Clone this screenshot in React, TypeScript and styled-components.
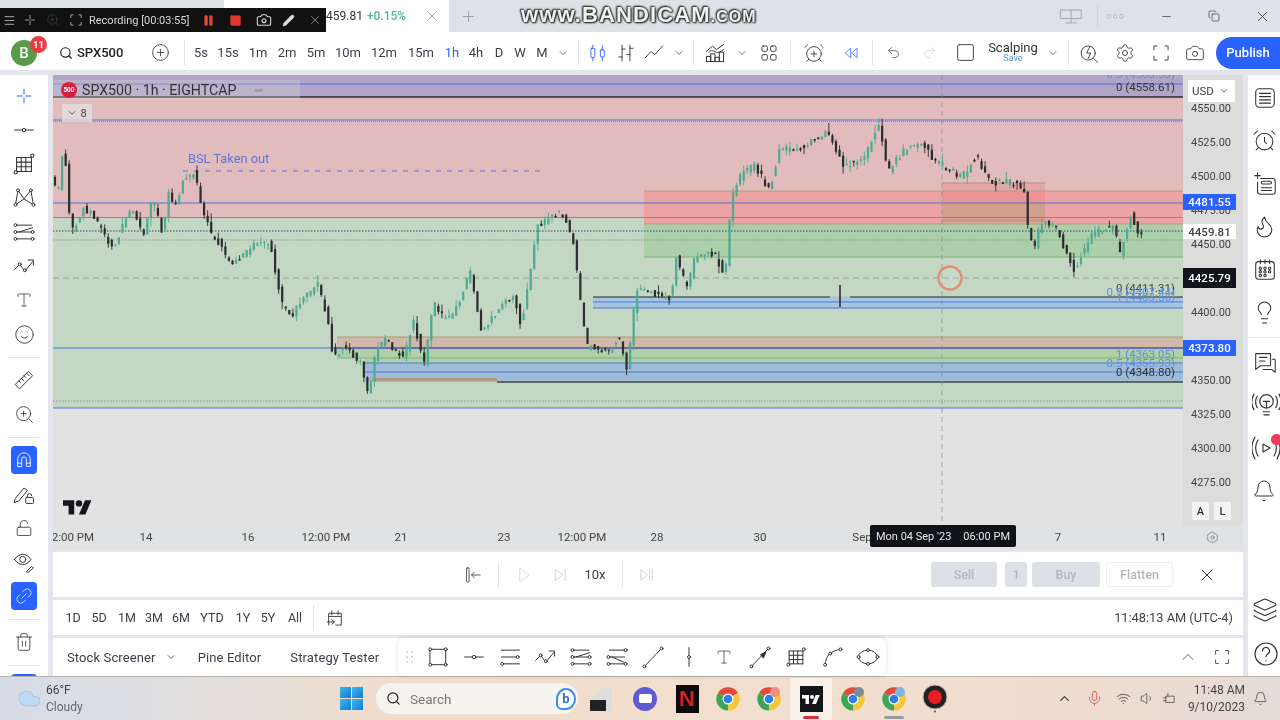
import React from "react";
import styled, { createGlobalStyle } from "styled-components";
import {
  Search, CirclePlus, ChevronDown, ChevronUp, AlarmClockPlus, AlarmClock, Undo2, Redo2, Settings, Camera, Minus, X, Plus,
  Layers, Bell, Flame, Lightbulb, Smile, ZoomIn, Trash2, LockOpen, Pause, Square, Pencil, Menu,
  Mic, Wifi, Volume1, Copy, Cloud, Type,
} from "lucide-react";

const GlobalStyle = createGlobalStyle`
  html, body { margin: 0; padding: 0; background: #e4e6eb; overflow: hidden; }
  body { font-family: Roboto, "Liberation Sans", sans-serif; color: #2a2e39; }
  #root { width: 1280px; height: 720px; }
`;

const Page = styled.div`
  width: 1280px; height: 720px; display: flex; flex-direction: column; position: relative; overflow: hidden;
  background: #e4e6eb; filter: blur(0.45px);
`;

/* ---------- generic line glyph ---------- */
const GlyphSvg = styled.svg<{ $s: number; $c?: string }>`
  width: ${p => p.$s}px; height: ${p => p.$s}px; flex: none; display: block;
  fill: none; stroke: ${p => p.$c ?? "#333"}; stroke-width: 1.15; stroke-linecap: round; stroke-linejoin: round;
`;
const G = ({ s = 24, c, children }: { s?: number; c?: string; children: React.ReactNode }) => (
  <GlyphSvg viewBox="0 0 28 28" $s={s} $c={c}>{children}</GlyphSvg>
);
const Dot = ({ x, y, r = 1.7 }: { x: number; y: number; r?: number }) => <circle cx={x} cy={y} r={r} fill="#fff" />;

const icons: Record<string, React.ReactNode> = {
  cross: <path d="M14 6v6M14 16v6M6 14h6M16 14h6" />,
  dash: <><path d="M3 14h9M16 14h9" /><circle cx="14" cy="14" r="2" /></>,
  fibgrid: <><path d="M6 7h16M6 12h16M6 17h16M6 22h16M6 7v15M11 7v15M16 7v15M22 7v15" /><Dot x={23} y={5} /><Dot x={5} y={23} /></>,
  xabcd: <><path d="M7 5l-3 17M7 5l7 10 8-10 3 17M4 22l10-7 11 7" /><Dot x={7} y={5} /><Dot x={22} y={5} /><Dot x={4} y={22} /><Dot x={25} y={22} /></>,
  fibchan: <><path d="M5 6h18M8 14l16-5M5 14h18M5 22h18" /><Dot x={4} y={6} /><Dot x={24} y={14} /><Dot x={4} y={14} /><Dot x={4} y={22} /><Dot x={24} y={22} /></>,
  fibchan2: <><path d="M5 6h18M5 14h18M5 22h18M8 14l14 6" /><Dot x={24} y={6} /><Dot x={4} y={14} /><Dot x={4} y={22} /><Dot x={24} y={22} /></>,
  path: <><path d="M3 18l6-6 6 8 9-11M19 7h6v6" /><Dot x={9} y={12} /><Dot x={15} y={19} /></>,
  ruler: <><path d="M4 19L19 4l5 5L9 24zM8 15l2 2M11 12l3 3M14 9l2 2M17 6l3 3" /></>,
  magnet: <path d="M6 22V13a8 8 0 0 1 16 0v9h-5v-9a3 3 0 0 0-6 0v9zM6 18h5M17 18h5" />,
  pencilLock: <><path d="M4 19L14 7l4 3L8 22l-5 2z" /><rect x="16" y="18" width="9" height="7" rx="1" /><path d="M18 18v-2a2.400 2.400 0 0 1 5 0" /></>,
  eyePencil: <><path d="M3 11c5-8 14-8 19 0-5 8-14 8-19 0z" /><circle cx="12.500" cy="11" r="3.500" /><path d="M17 25l6-6 2 2-6 5z" /></>,
  link: <path d="M12 9l3-3a5 5 0 0 1 7 7l-3 3M16 19l-3 3a5 5 0 0 1-7-7l3-3M11 17l6-6" />,
  candles: <><rect x="5" y="8" width="5" height="12" rx="1" /><path d="M7.500 4v4M7.500 20v4" /><rect x="17" y="10" width="5" height="9" rx="1" /><path d="M19.500 5v5M19.500 19v5" /></>,
  bars: <path d="M9 4v20M9 9h4M5 19h4M19 4v20M19 8h4M15 16h4" />,
  line: <path d="M3 20l7-8 5 4 10-11" />,
  indic: <><path d="M4 12l7-6 5 4 8-6M7 13c3-3 5-2 8 0 3 1 5 0 9-3" /><path d="M4 24v-6h5v6M9 24V15h5v9M14 24v-5h5v5M19 24V13h5v11M4 24h20" /></>,
  grid4: <><rect x="5" y="5" width="7" height="7" rx="2" /><rect x="16" y="5" width="7" height="7" rx="2" /><rect x="5" y="16" width="7" height="7" rx="2" /><rect x="16" y="16" width="7" height="7" rx="2" /></>,
  rewind: <path d="M13 7l-8 7 8 7zM23 7l-8 7 8 7z" />,
  flash: <><circle cx="13" cy="14" r="9" /><path d="M20 21l5 5M15 6l-4 8h5l-3 7" /></>,
  corners: <path d="M9 5H5v5M19 5h4v5M9 23H5v-5M19 23h4v-5" />,
  selectbar: <><rect x="5" y="4" width="3.500" height="20" rx="1" /><path d="M24 14H12M16 10l-4 4 4 4" /></>,
  playT: <path d="M8 4l14 10-14 10z" />,
  stepf: <path d="M7 6l11 8-11 8zM22 5v18" />,
  jump: <path d="M5 6l10 8-10 8zM18 5v18M22 5v18" />,
  calgo: <path d="M6 23V8h16v15h-7M6 12h16M10 5v5M18 5v5M4 19h9M10 16l3 3-3 3" />,
  rect: <><rect x="5" y="5" width="18" height="18" /><Dot x={5} y={5} /><Dot x={23} y={5} /><Dot x={5} y={23} /><Dot x={23} y={23} /></>,
  lines3: <><path d="M4 6h21M4 14h17M7 22h18" /><Dot x={23} y={14} /><Dot x={5} y={22} /></>,
  trend: <><path d="M5 24L23 5" /><Dot x={4} y={25} /><Dot x={24} y={4} /></>,
  vline: <><path d="M14 3v22" /><Dot x={14} y={14} /></>,
  arrow: <><path d="M5 24L23 5" /><path d="M15 11l6-3-3 7z" fill="#333" /><Dot x={4} y={25} /><Dot x={24} y={4} /></>,
  curve: <><path d="M6 23C7 12 12 7 24 5" /><Dot x={6} y={23} /><Dot x={12} y={10} /><Dot x={24} y={5} /></>,
  ellipse: <><ellipse cx="14" cy="14" rx="11" ry="8" /><Dot x={14} y={6} /><Dot x={3} y={14} /><Dot x={25} y={14} /><Dot x={14} y={22} /></>,
  list: <><rect x="4" y="4" width="20" height="20" rx="4" /><path d="M8 9h12M8 12.500h12M8 16h12M8 19.500h12" /></>,
  addList: <><path d="M9 8h13a3 3 0 0 1 3 3v11a3 3 0 0 1-3 3H9a3 3 0 0 1-3-3V12M3 5h6M6 2v6" /><rect x="10" y="11" width="11" height="3" rx="1.500" /><path d="M10 18h11M10 21h11" /></>,
  cal: <><rect x="4" y="5" width="20" height="19" rx="3" /><path d="M9 3v4M14 3v4M19 3v4" /><circle cx="9" cy="12" r="1.300" /><circle cx="14" cy="12" r="1.300" /><circle cx="19" cy="12" r="1.300" /><circle cx="9" cy="16" r="1.300" /><circle cx="14" cy="16" r="1.300" /><circle cx="19" cy="16" r="1.300" /><circle cx="9" cy="20" r="1.300" /><circle cx="14" cy="20" r="1.300" /></>,
  chat: <path d="M4 5h15a1 1 0 0 1 1 1v11a1 1 0 0 1-1 1H9l-5 4zM8 9h8M8 13h6M22 11h2a1 1 0 0 1 1 1v13l-4-3H12" />,
  bulbwave: <><circle cx="14" cy="11" r="6.500" /><path d="M11 21h6M11.500 24h5M11 11h6M14 11v6M5 6c-2 3-2 8 0 11M2 4c-3 5-3 10 0 15M23 6c2 3 2 8 0 11M26 4c3 5 3 10 0 15" /></>,
  playwave: <path d="M11 10l7 4-7 4zM6 6c-3 5-3 11 0 16M3 3c-4 7-4 15 0 22M22 6c3 5 3 11 0 16M25 3c4 7 4 15 0 22" />,
  help: <><circle cx="14" cy="14" r="11" /><path d="M10.500 11a3.500 3.500 0 1 1 5.200 3c-1.200.7-1.700 1.400-1.700 2.800M14 20.500v.3" /></>,
  monitor: <path d="M2 7h24v10H2zM14 7v15M8 22h12" />,
  hexgear: <><path d="M14 4l9 5v10l-9 5-9-5V9z" /><circle cx="14" cy="14" r="3" /></>,
  plugbat: <path d="M9 9h14v11H9zM9 12H4M9 17H4M12 9V4" />,
};
const Ic = ({ n, s, c }: { n: string; s?: number; c?: string }) => <G s={s} c={c}>{icons[n]}</G>;

/* ---------- slots used by all bars ---------- */
const Slot = styled.div<{ $w: number; $c?: string; $fs?: number; $b?: boolean }>`
  width: ${p => p.$w}px; flex: none; display: flex; align-items: center; justify-content: center;
  font-size: ${p => p.$fs ?? 13}px; color: ${p => p.$c ?? "#3c4048"}; font-weight: ${p => (p.$b ? 500 : 400)};
  white-space: nowrap;
`;
const Sep = styled.i` display: block; width: 1px; height: 26px; background: #e3e5ea; `;

/* ---------- browser tab strip ---------- */
const TabStrip = styled.div` height: 32px; flex: none; display: flex; align-items: center; background: #dee2e8; `;
const ActiveTab = styled.div`
  margin-left: 224px; width: 225px; height: 32px; background: #fff; display: flex; align-items: center;
  padding-left: 102px; box-sizing: border-box; font-size: 12px; color: #333; gap: 4px;
`;
const Up = styled.span` color: #4fb893; font-weight: 500; `;
const TabClose = styled.span` margin-left: 14px; display: flex; color: #8c8f96; `;
const WinControls = styled.div` margin-left: auto; display: flex; align-items: center; color: #555; `;
const VSep = styled.i` display: block; width: 1px; height: 22px; background: #cfd3da; margin: 0 8px 0 14px; `;
const ThreeDots = styled.span` font-size: 9px; letter-spacing: 1px; color: #999; width: 48px; text-align: left; `;

/* recording overlay */
const RecBar = styled.div`
  position: absolute; left: 0; top: 8px; width: 326px; height: 24px; background: #111; color: #d8d8d8; display: flex; align-items: center;
  font-size: 12px; z-index: 5;
`;
const RecText = styled.span` width: 111px; flex: none; padding-left: 1px; box-sizing: border-box; font-size: 11px; `;
const Watermark = styled.div`
  position: absolute; left: 521px; top: 2px; z-index: 5; font: 700 22px "Liberation Sans", sans-serif; letter-spacing: 1.1px; color: #f1f1f1;
  text-shadow: 0 0 2px #222, 0 0 2px #222, 1px 1px 2px #222, -1px -1px 2px #222;
`;
const WmSmall = styled.span` font-size: 16px; `;

/* ---------- top toolbar ---------- */
const TopBar = styled.div` height: 38px; flex: none; background: #fff; display: flex; align-items: flex-end; box-sizing: border-box; `;
const TopRow = styled.div` height: 35px; display: flex; align-items: stretch; width: 100%; `;
const Avatar = styled.div`
  position: relative; width: 26px; height: 26px; border-radius: 50%; background: #5a9a4c; color: #fff; display: flex; align-items: center; justify-content: center;
  font-size: 15px; font-weight: 500;
`;
const Badge = styled.span`
  position: absolute; left: 19px; top: -4px; width: 17px; height: 17px; border-radius: 50%; background: #ee3a43; color: #fff; font-size: 9.500px;
  display: flex; align-items: center; justify-content: center; font-weight: 700;
`;
const Symbol = styled.div` width: 92px; display: flex; align-items: center; gap: 4px; padding-left: 11px; box-sizing: border-box; font-size: 13px; font-weight: 500; color: #222; `;
const SaveStack = styled.div` display: flex; flex-direction: column; align-items: center; line-height: 12px; font-size: 13px; color: #333; `;
const SaveLabel = styled.span` font-size: 9px; line-height: 9px; color: #5b8fd8; `;
const Publish = styled.div`
  width: 64px; height: 32px; flex: none; align-self: center; border-radius: 16px 0 0 16px; background: #2962ff; color: #fff; display: flex; align-items: center; justify-content: center; font-size: 13px; font-weight: 500;
`;

/* ---------- main ---------- */
const Main = styled.div` flex: 1; display: flex; margin-top: 5px; min-height: 0; gap: 5px; `;
const LeftBar = styled.div`
  width: 48px; flex: none; background: #fff; display: flex; flex-direction: column; align-items: center; padding-top: 4px; box-sizing: border-box; overflow: hidden;
`;
const ToolSlot = styled.div`
  width: 100%; height: 34px; flex: none; display: flex; align-items: center; justify-content: center; color: #333;
`;
const Active = styled.div` width: 26px; height: 28px; border-radius: 4px; background: #2962ff; display: flex; align-items: center; justify-content: center; `;
const ToolSep = styled.div` height: 12px; flex: none; width: 32px; display: flex; align-items: center; &::before { content: ""; width: 100%; height: 1px; background: #e4e6ea; } `;
const Center = styled.div` flex: 1; display: flex; flex-direction: column; min-width: 0; `;
const ChartWrap = styled.div` display: grid; grid-template-columns: 1130px 60px; grid-template-rows: 450px 25px; height: 475px; flex: none; position: relative; `;
const PlotSvg = styled.svg` display: block; width: 1130px; height: 450px; background: #e2e2e2; `;
const Legend = styled.div`
  position: absolute; left: 0; top: 5px; width: 247px; height: 20px; background: rgba(214,214,214,.32); display: flex; align-items: center; padding-left: 8px; box-sizing: border-box;
  font-size: 14.200px; color: #303238; gap: 5px;
`;
const SymbolMark = styled.span`
  width: 16px; height: 16px; border-radius: 50%; background: #d8203a; color: #fff; font-size: 6.500px; font-weight: 700; display: flex; align-items: center; justify-content: center; flex: none;
`;
const LegendEq = styled.span` margin-left: 14px; width: 8px; height: 3px; background: #a0a0a8; `;
const Fold = styled.div`
  position: absolute; left: 9px; top: 29px; width: 30px; height: 18px; background: rgba(226,226,226,.75); display: flex; align-items: center; justify-content: center; gap: 3px; font-size: 11px; color: #444;
`;
const PriceAxis = styled.div` position: relative; background: #dcdcdd; overflow: hidden; `;
const PriceText = styled.span<{ $y: number }>`
  position: absolute; left: 8px; top: ${p => p.$y - 75 - 6}px; font-size: 11px; line-height: 14px; color: #444;
`;
const PriceTag = styled.span<{ $y: number; $h: number; $bg: string; $c: string }>`
  position: absolute; left: 0; width: 53px; top: ${p => p.$y - 75 - p.$h / 2}px; height: ${p => p.$h}px; background: ${p => p.$bg}; color: ${p => p.$c};
  font-size: 11.500px; font-weight: 500; display: flex; align-items: center; justify-content: center;
`;
const Usd = styled.div`
  position: absolute; left: 5px; top: 5px; width: 47px; height: 22px; background: #fff; display: flex; align-items: center; justify-content: space-between; padding: 0 6px 0 4px; box-sizing: border-box; font-size: 11.500px; color: #444;
`;
const ModeBtn = styled.span<{ $x: number }>`
  position: absolute; left: ${p => p.$x}px; top: 427px; width: 17px; height: 18px; background: #f4f4f4; color: #333; font-size: 11px; display: flex; align-items: center; justify-content: center; font-weight: 500;
`;
const TimeAxis = styled.div` position: relative; background: #e1e2e3; overflow: hidden; `;
const TimeText = styled.span<{ $x: number }>`
  position: absolute; left: ${p => p.$x - 53}px; top: 5px; transform: translateX(-50%); font-size: 11.500px; line-height: 15px; color: #444; white-space: nowrap;
`;
const TimeTip = styled.div`
  position: absolute; left: 817px; top: 0; width: 146px; height: 22px; background: #101218; color: #e8e8e8; font-size: 11px; display: flex; align-items: center; justify-content: center; gap: 12px; border-radius: 2px;
`;
const AxisCorner = styled.div` background: #e1e2e3; display: flex; align-items: center; justify-content: center; color: #666; padding-right: 2px; `;

const Panel = styled.div<{ $h: number; $mt: number }>`
  height: ${p => p.$h}px; margin-top: ${p => p.$mt}px; flex: none; background: #fff; display: flex; align-items: center; position: relative;
`;
const TradeBtn = styled.div<{ $w: number; $ml?: number; $outline?: boolean }>`
  width: ${p => p.$w}px; height: 25px; border-radius: 3px; margin-left: ${p => p.$ml ?? 0}px; flex: none;
  background: ${p => (p.$outline ? "#fff" : "#dde0e6")}; border: ${p => (p.$outline ? "1px solid #eceef1" : "0")}; box-sizing: border-box;
  color: #b4b7bd; font-size: 12.500px; font-weight: 500; display: flex; align-items: center; justify-content: center;
`;
const Right = styled.div` margin-left: auto; display: flex; align-items: center; `;
const CloseSlot = styled.div` margin: 0 26px 0 24px; color: #333; display: flex; `;
const Clock = styled.div` font-size: 12.800px; color: #444; margin-right: 10px; `;
const BottomTab = styled.span<{ $ml: number }>` margin-left: ${p => p.$ml}px; font-size: 13px; letter-spacing: .12px; color: #3c4048; white-space: nowrap; `;
const DrawBar = styled.div`
  margin-left: 19px; width: 488px; height: 38px; display: flex; align-items: center; background: #fff; border-radius: 6px; box-shadow: 0 0 4px rgba(0,0,0,.14);
`;
const GripDots = styled.div` display: grid; grid-template-columns: 2px 2px; gap: 3px; & > i { width: 2px; height: 2px; background: #ccc; border-radius: 50%; } `;

const SideBar = styled.div`
  width: 32px; flex: none; background: #fff; display: flex; flex-direction: column; align-items: center; padding-top: 1px; box-sizing: border-box;
`;
const SideSlot = styled.div<{ $h: number }>` height: ${p => p.$h}px; flex: none; display: flex; align-items: center; justify-content: flex-start; width: 100%; padding-left: 4px; box-sizing: border-box; color: #333; position: relative; `;
const SideSep = styled.div` width: 100%; height: 6px; flex: none; display: flex; align-items: center; &::before { content: ""; width: 100%; height: 1px; background: #e4e6ea; } `;
const RedDot = styled.span` position: absolute; right: -2px; top: 8px; width: 11px; height: 11px; border-radius: 50%; background: #f23b5c; `;
const SideBottom = styled.div` margin-top: auto; width: 100%; display: flex; flex-direction: column; `;

/* ---------- taskbar ---------- */
const Taskbar = styled.div`
  height: 44px; flex: none; display: flex; align-items: center; border-top: 1px solid #b9b6b2; box-sizing: border-box;
  background: linear-gradient(90deg, #d5dbe7 0%, #dfdfe2 12%, #f1ddca 32%, #f3dfcf 60%, #eedccf 85%, #e6dbd6 100%);
`;
const Weather = styled.div` width: 330px; flex: none; display: flex; align-items: center; gap: 4px; padding-left: 17px; box-sizing: border-box; `;
const WeatherText = styled.div` font-size: 12px; line-height: 17px; color: #444; `;
const Grey = styled.div` color: #666; `;
const WinLogo = styled.div` display: grid; grid-template-columns: 11px 11px; gap: 1px; & > i { width: 11px; height: 11px; background: linear-gradient(135deg, #3db8ee, #0f7dd0); } `;
const SearchPill = styled.div`
  margin-left: 4px; width: 202px; height: 31px; border-radius: 16px; background: #f7f4f0; display: flex; align-items: center; padding: 0 2px 0 10px; box-sizing: border-box; gap: 9px; font-size: 13.500px; color: #777; flex: none;
`;
const BingMark = styled.div` margin-left: auto; width: 20px; height: 22px; border: 2px solid #3b8ee8; border-radius: 50% 50% 50% 6px; background: #fff; color: #2b6fd6; display: flex; align-items: center; justify-content: center; font-size: 13px; font-weight: 700; box-sizing: border-box; `;
const AppStack = styled.div<{ $active?: boolean }>`
  width: 100%; height: 42px; display: flex; align-items: center; justify-content: center; position: relative;
  background: ${p => (p.$active ? "rgba(255,255,255,.55)" : "transparent")};
`;
const Under = styled.span<{ $c: string; $w: number }>`
  position: absolute; bottom: 1px; left: 50%; transform: translateX(-50%); width: ${p => p.$w}px; height: 2.500px; border-radius: 2px; background: ${p => p.$c};
`;
const DocIcon = styled.div` width: 22px; height: 24px; background: linear-gradient(135deg, transparent 30%, #ddd 30%); position: relative; &::after { content: ""; position: absolute; left: 0; bottom: 0; width: 16px; height: 11px; background: #222; } `;
const Netflix = styled.div` width: 23px; height: 28px; background: #0b0b0b; color: #d81f26; font: 700 22px "Liberation Sans", sans-serif; display: flex; align-items: center; justify-content: center; `;
const TvTile = styled.div` width: 23px; height: 26px; background: #121418; display: flex; align-items: center; justify-content: center; `;
const MeetBall = styled.div` width: 24px; height: 24px; border-radius: 50%; background: #5f5bd3; display: flex; align-items: center; justify-content: center; `;
const MeetCam = styled.i` width: 13px; height: 9px; background: #fff; border-radius: 2px; display: block; `;
const ClockText = styled.div` font-size: 12px; line-height: 17px; color: #444; text-align: right; width: 100%; padding-right: 7px; box-sizing: border-box; `;
const Tray = styled.div` margin-left: auto; display: flex; align-items: center; padding-right: 12px; `;

/* ---------- chrome logo, tv logo ---------- */
const Chrome = ({ badge }: { badge?: string }) => (
  <svg width="26" height="26" viewBox="0 0 26 26">
    <path d="M13 13L3 7A11.500 11.500 0 0 1 23 7z" fill="#e2493b" />
    <path d="M13 13L23 7A11.500 11.500 0 0 1 13 24.500z" fill="#f5c53a" />
    <path d="M13 13L13 24.500A11.500 11.500 0 0 1 3 7z" fill="#3da655" />
    <circle cx="13" cy="13" r="5.500" fill="#fff" /><circle cx="13" cy="13" r="4.300" fill="#2f7fe6" />
    {badge && <circle cx="19" cy="6" r="5" fill={badge} />}
  </svg>
);
const TvLogo = ({ color = "#fff", w = 18 }: { color?: string; w?: number }) => (
  <svg width={w} height={w * 0.62} viewBox="0 0 36 22"><path d="M14 22H7V11H0V4h14v18zM28 22h-8l7.500-18h8L28 22z" fill={color} /><circle cx="20" cy="8" r="4" fill={color} /></svg>
);

/* ---------- chart data ---------- */
const pts: [number, number][] = [[53,180],[60,190],[66,138],[70,210],[74,232],[86,207],[97,218],[115,250],[126,220],[135,210],[145,238],[154,197],[165,235],[170,192],[177,208],[185,178],[197,173],[203,207],[212,232],[221,243],[232,265],[246,255],[257,243],[272,243],[283,303],[294,315],[319,283],[330,320],[335,360],[346,345],[363,363],[370,397],[377,353],[386,340],[406,358],[415,320],[426,363],[435,302],[446,320],[457,310],[472,273],[483,332],[501,310],[515,293],[523,327],[539,227],[563,210],[575,243],[588,347],[612,350],[620,337],[629,370],[638,290],[673,298],[678,258],[689,290],[696,258],[715,253],[727,275],[733,197],[744,173],[756,165],[771,190],[782,147],[795,152],[829,132],[845,167],[867,157],[881,122],[889,173],[904,152],[922,142],[936,160],[964,177],[978,155],[991,182],[1011,182],[1027,190],[1029,223],[1035,253],[1042,222],[1056,225],[1076,270],[1093,235],[1116,225],[1121,257],[1133,212],[1142,243],[1145,225]];
const yAt = (x: number) => {
  for (let i = 1; i < pts.length; i++) if (x <= pts[i][0]) {
    const [a, b] = pts[i - 1], [c, d] = pts[i];
    return b + ((d - b) * (x - a)) / (c - a);
  }
  return pts[pts.length - 1][1];
};
let seed = 42;
const rnd = () => { seed = (seed * 16807) % 2147483647; return seed / 2147483647; };
const STEP = 3.55;
const candles = Array.from({ length: Math.floor((1145 - 55) / STEP) }, (_, i) => {
  const x = 55 + i * STEP;
  const o = yAt(x - STEP / 2) + (rnd() - 0.5) * 7;
  const c = yAt(x + STEP / 2) + (rnd() - 0.5) * 7;
  const hi = Math.min(o, c) - rnd() * rnd() * 9;
  const lo = Math.max(o, c) + rnd() * rnd() * 9;
  return { x, o, c, hi, lo, up: c < o };
});

const HLine = ({ y, c, x1 = 53, x2 = 1183, w = 1, dash }: { y: number; c: string; x1?: number; x2?: number; w?: number; dash?: string }) => (
  <line x1={x1} x2={x2} y1={y} y2={y} stroke={c} strokeWidth={w} strokeDasharray={dash} />
);
const Zone = ({ x = 53, x2 = 1183, y, y2, c }: { x?: number; x2?: number; y: number; y2: number; c: string }) => (
  <rect x={x} y={y} width={x2 - x} height={y2 - y} fill={c} />
);
const FibText = ({ y, c, t }: { y: number; c: string; t: string }) => (
  <text x="1175" y={y} textAnchor="end" fontSize="11.500" fill={c} fontFamily="Roboto, sans-serif">{t}</text>
);

const Plot = () => (
  <PlotSvg viewBox="53 75 1130 450">
    <Zone y={75} y2={97} c="#b2a4c8" />
    <Zone y={97} y2={218} c="#e2bcbd" />
    <Zone y={218} y2={408} c="#c3d7c2" />
    <Zone x={644} y={191} y2={224} c="#eba3a4" />
    <Zone x={644} y={224} y2={257} c="#abd0a9" />
    <Zone x={942} x2={1045} y={183} y2={203} c="rgba(232,110,120,.28)" />
    <Zone x={942} x2={1045} y={203} y2={221} c="rgba(170,150,100,.35)" />
    <Zone x={593} y={297} y2={308} c="#a6c3df" />
    <Zone x={337} y={337} y2={348} c="#d0b8ab" />
    <Zone x={337} y={348} y2={358} c="#aed0ab" />
    <Zone x={365} y={358} y2={363} c="#aed0ab" />
    <Zone x={365} y={363} y2={382} c="#9fbcd7" />
    <Zone x={372} x2={497} y={378} y2={381} c="#b09a84" />
    <HLine y={84} c="#4f6fd8" />
    <HLine y={97} c="#2a2a30" w={1.300} />
    <HLine y={120} c="#5575d8" />
    <HLine y={121.500} c="#7f88b8" dash="1 1" />
    <HLine y={203} c="#4f6fd8" />
    <HLine y={217.500} c="#c2706c" />
    <HLine y={191} x1={644} c="#b89a80" />
    <HLine y={224} x1={644} c="#b49b78" />
    <HLine y={257} x1={644} c="#7fb07a" />
    <HLine y={183} x1={942} x2={1045} c="#b58f78" />
    <HLine y={221} x1={942} x2={1045} c="#a79a78" />
    <HLine y={231} c="#34446e" dash="1.500 1.500" />
    <HLine y={240} c="#8d9c8c" dash="1.500 1.500" />
    <HLine y={278} c="#97a596" dash="6 4" />
    <HLine y={297} x1={593} c="#25282c" w={1.200} />
    <HLine y={302} x1={593} c="#4f79d8" />
    <HLine y={308} x1={593} c="#4f79d8" />
    <HLine y={337} x1={337} c="#a99a73" />
    <HLine y={348} c="#4f76d8" />
    <HLine y={348} x1={337} c="#6a58a8" w={1.300} />
    <HLine y={358} x1={337} c="#7fb07a" />
    <HLine y={363} x1={365} c="#4f76d8" />
    <HLine y={372} x1={365} c="#4f76d8" />
    <HLine y={382} x1={497} c="#40484a" w={1.300} />
    <HLine y={401} c="#8d9c8c" dash="1.500 1.500" />
    <HLine y={408} c="#4f6fd8" />
    <HLine y={171} x1={183} x2={540} c="#5f75d6" dash="5 6" />
    <line x1="942" x2="942" y1="75" y2="525" stroke="#8a8d94" strokeDasharray="5 4" strokeWidth=".7" />
    {candles.map((k, i) => {
      const col = k.up ? "#4dab90" : "#2b2c2e";
      return (
        <g key={i}>
          <line x1={k.x} x2={k.x} y1={k.hi} y2={k.lo} stroke={col} strokeWidth=".9" />
          <rect x={k.x - 1.1} y={Math.min(k.o, k.c)} width="2.200" height={Math.max(Math.abs(k.o - k.c), 1.500)} fill={col} />
        </g>
      );
    })}
    <text x="188" y="163" fontSize="12.800" fill="#5f75d6" fontFamily="Roboto, sans-serif">BSL Taken out</text>
    <FibText y={78} c="#6b8fd8" t="0.5 (4568.58)" />
    <FibText y={91} c="#333" t="0 (4558.61)" />
    <FibText y={292} c="#444" t="0 (4411.31)" />
    <FibText y={296} c="#5f8fe0" t="0.5 (4407.44)" />
    <FibText y={301} c="#5f8fe0" t="1 (4403.56)" />
    <FibText y={358} c="#5f8fe0" t="1 (4363.05)" />
    <FibText y={367} c="#5f8fe0" t="0.5 (4355.93)" />
    <FibText y={376} c="#333" t="0 (4348.80)" />
    <circle cx="950" cy="278" r="11.500" fill="rgba(255,255,255,.1)" stroke="#e0907c" strokeWidth="2.500" />
    <path d="M830 297h20" stroke="#f4f4f4" strokeWidth="1.200" />
    <path d="M840 285v22" stroke="#222" strokeWidth="1.500" />
    <g transform="translate(63 497) scale(.8)">
      <path d="M14 22H7V11H0V4h14v18zM28 22h-8l7.500-18h8L28 22z" fill="#15171c" /><circle cx="20" cy="8" r="4" fill="#15171c" />
    </g>
  </PlotSvg>
);

const TF: [string, number, string?][] = [["5s",26],["15s",28],["1m",32],["2m",26],["5m",32],["10m",32],["12m",40],["15m",34],["1h",28,"#2962ff"],["4h",20],["D",26],["W",16],["M",28]];
const prices: [string, number][] = [["4550.00",108],["4525.00",142],["4500.00",176],["4475.00",210],["4450.00",244],["4400.00",312],["4350.00",380],["4325.00",414],["4300.00",448],["4275.00",482]];
const times: [string, number][] = [["2:00 PM",73],["14",146],["16",248],["12:00 PM",326],["21",401],["23",504],["12:00 PM",582],["28",657],["30",760],["Sep",862],["7",1058],["11",1160]];
const ranges: [string, number][] = [["1D",26],["5D",26],["1M",30],["3M",24],["6M",30],["YTD",32],["1Y",30],["5Y",20],["All",34]];
const drawTools = ["rect","dash","lines3","path","fibchan","fibchan2","trend","vline","T","arrow","fibgrid","curve","ellipse"];

export default function App() {
  return (
    <Page>
      <GlobalStyle />
      <TabStrip>
        <ActiveTab>
          <span>459.81</span><Up>+0.15%</Up>
          <TabClose><X size={16} strokeWidth={1.2} /></TabClose>
        </ActiveTab>
        <Slot $w={38} $c="#888"><Plus size={17} strokeWidth={1} /></Slot>
        <WinControls>
          <Slot $w={24}><Ic n="monitor" s={24} c="#a2a5ab" /></Slot>
          <VSep />
          <ThreeDots>○○○</ThreeDots>
          <Slot $w={24}><Minus size={13} strokeWidth={1.4} /></Slot>
          <Slot $w={72}><Copy size={12} strokeWidth={1.4} /></Slot>
          <Slot $w={24}><X size={17} strokeWidth={1.2} /></Slot>
          <Slot $w={6} />
        </WinControls>
      </TabStrip>

      <RecBar>
        <Slot $w={18} $c="#ddd"><Menu size={13} strokeWidth={1.4} /></Slot>
        <Slot $w={24}><Ic n="cross" s={16} c="#ddd" /></Slot>
        <Slot $w={22}><ZoomIn size={14} strokeWidth={1.3} /></Slot>
        <Slot $w={24}><Ic n="corners" s={16} c="#ddd" /></Slot>
        <RecText>Recording [00:03:55]</RecText>
        <Slot $w={18} $c="#e04836"><Pause size={13} fill="#e04836" strokeWidth={1} /></Slot>
        <Slot $w={36} $c="#e4352a"><Square size={13} fill="#e4352a" strokeWidth={1} /></Slot>
        <Slot $w={22} $c="#ddd"><Camera size={16} strokeWidth={1.6} /></Slot>
        <Slot $w={26} $c="#ddd"><Pencil size={13} fill="#ddd" strokeWidth={1.2} /></Slot>
        <Slot $w={28} $c="#aaa"><X size={14} strokeWidth={1.2} /></Slot>
      </RecBar>
      <Watermark>www.BANDICAM<WmSmall>.COM</WmSmall></Watermark>

      <TopBar>
        <TopRow>
          <Slot $w={48}><Avatar>B<Badge>11</Badge></Avatar></Slot>
          <Symbol><Search size={14} strokeWidth={2} />SPX500</Symbol>
          <Slot $w={40}><CirclePlus size={19} strokeWidth={1.1} /></Slot>
          <Slot $w={8}><Sep /></Slot>
          {TF.map(([t, w, c]) => <Slot key={t} $w={w} $c={c}>{t}</Slot>)}
          <Slot $w={14}><ChevronDown size={12} strokeWidth={1.5} /></Slot>
          <Slot $w={16}><Sep /></Slot>
          <Slot $w={24}><Ic n="candles" s={22} c="#2962ff" /></Slot>
          <Slot $w={32}><Ic n="bars" s={22} /></Slot>
          <Slot $w={24}><Ic n="line" s={22} /></Slot>
          <Slot $w={26}><ChevronDown size={12} strokeWidth={1.5} /></Slot>
          <Slot $w={2}><Sep /></Slot>
          <Slot $w={42}><Ic n="indic" s={24} /></Slot>
          <Slot $w={12}><ChevronDown size={12} strokeWidth={1.5} /></Slot>
          <Slot $w={42}><Ic n="grid4" s={22} /></Slot>
          <Slot $w={1}><Sep /></Slot>
          <Slot $w={46}><AlarmClockPlus size={22} strokeWidth={1} /></Slot>
          <Slot $w={28}><Ic n="rewind" s={18} c="#2962ff" /></Slot>
          <Slot $w={14}><Sep /></Slot>
          <Slot $w={28}><Undo2 size={15} strokeWidth={1.1} /></Slot>
          <Slot $w={44} $c="#ccc"><Redo2 size={15} strokeWidth={1.1} /></Slot>
          <Slot $w={28}><Square size={21} strokeWidth={1.1} /></Slot>
          <Slot $w={68}><SaveStack>Scalping<SaveLabel>Save</SaveLabel></SaveStack></Slot>
          <Slot $w={12}><ChevronDown size={12} strokeWidth={1.5} /></Slot>
          <Slot $w={18}><Sep /></Slot>
          <Slot $w={24}><Ic n="flash" s={22} /></Slot>
          <Slot $w={48}><Settings size={20} strokeWidth={1.1} /></Slot>
          <Slot $w={24}><Ic n="corners" s={22} /></Slot>
          <Slot $w={43}><Camera size={20} strokeWidth={1.1} /></Slot>
          <Publish>Publish</Publish>
        </TopRow>
      </TopBar>

      <Main>
        <LeftBar>
          <ToolSlot><Ic n="cross" c="#2962ff" /></ToolSlot>
          <ToolSlot><Ic n="dash" /></ToolSlot>
          <ToolSlot><Ic n="fibgrid" s={26} /></ToolSlot>
          <ToolSlot><Ic n="xabcd" /></ToolSlot>
          <ToolSlot><Ic n="fibchan" /></ToolSlot>
          <ToolSlot><Ic n="path" /></ToolSlot>
          <ToolSlot><Type size={18} strokeWidth={1} /></ToolSlot>
          <ToolSlot><Smile size={21} strokeWidth={1} /></ToolSlot>
          <ToolSep />
          <ToolSlot><Ic n="ruler" /></ToolSlot>
          <ToolSlot><ZoomIn size={21} strokeWidth={1} /></ToolSlot>
          <ToolSep />
          <ToolSlot><Active><Ic n="magnet" s={22} c="#fff" /></Active></ToolSlot>
          <ToolSlot><Ic n="pencilLock" /></ToolSlot>
          <ToolSlot><LockOpen size={18} strokeWidth={1.1} /></ToolSlot>
          <ToolSlot><Ic n="eyePencil" /></ToolSlot>
          <ToolSlot><Active><Ic n="link" s={22} c="#cfe0ff" /></Active></ToolSlot>
          <ToolSep />
          <ToolSlot><Trash2 size={20} strokeWidth={1} /></ToolSlot>
          <ToolSep />
          <ToolSlot><Active /></ToolSlot>
        </LeftBar>

        <Center>
          <ChartWrap>
            <Plot />
            <Legend><SymbolMark>500</SymbolMark>SPX500 · 1h · EIGHTCAP<LegendEq /></Legend>
            <Fold><ChevronDown size={10} strokeWidth={2} />8</Fold>
            <PriceAxis>
              {prices.map(([t, y]) => <PriceText key={t} $y={y}>{t}</PriceText>)}
              <PriceTag $y={202} $h={16} $bg="#2962ff" $c="#fff">4481.55</PriceTag>
              <PriceTag $y={231.500} $h={15} $bg="#fff" $c="#444">4459.81</PriceTag>
              <PriceTag $y={277.500} $h={20} $bg="#12141a" $c="#fff">4425.79</PriceTag>
              <PriceTag $y={348} $h={16} $bg="#2962ff" $c="#fff">4373.80</PriceTag>
              <Usd>USD<ChevronDown size={10} strokeWidth={2} /></Usd>
              <ModeBtn $x={9}>A</ModeBtn>
              <ModeBtn $x={31}>L</ModeBtn>
            </PriceAxis>
            <TimeAxis>
              {times.map(([t, x], i) => <TimeText key={i} $x={x}>{t}</TimeText>)}
              <TimeTip><span>Mon 04 Sep '23</span><span>06:00 PM</span></TimeTip>
            </TimeAxis>
            <AxisCorner><Ic n="hexgear" s={15} c="#666" /></AxisCorner>
          </ChartWrap>

          <Panel $h={45} $mt={2}>
            <Slot $w={408} />
            <Slot $w={24}><Ic n="selectbar" s={20} /></Slot>
            <Slot $w={26}><Sep /></Slot>
            <Slot $w={26}><Ic n="playT" s={18} c="#ccd0d6" /></Slot>
            <Slot $w={46}><Ic n="stepf" s={18} c="#c0c4ca" /></Slot>
            <Slot $w={24}>10x</Slot>
            <Slot $w={30}><Sep /></Slot>
            <Slot $w={20}><Ic n="jump" s={18} c="#c0c4ca" /></Slot>
            <Right>
              <TradeBtn $w={66}>Sell</TradeBtn>
              <TradeBtn $w={22} $ml={8}>1</TradeBtn>
              <TradeBtn $w={68} $ml={5}>Buy</TradeBtn>
              <TradeBtn $w={67} $ml={6} $outline>Flatten</TradeBtn>
              <CloseSlot><X size={20} strokeWidth={1.2} /></CloseSlot>
            </Right>
          </Panel>

          <Panel $h={35} $mt={3}>
            <Slot $w={7} />
            {ranges.map(([t, w]) => <Slot key={t} $w={w} $fs={12.500}>{t}</Slot>)}
            <Slot $w={2}><Sep /></Slot>
            <Slot $w={42}><Ic n="calgo" s={22} /></Slot>
            <Right><Clock>11:48:13 AM (UTC-4)</Clock></Right>
          </Panel>

          <Panel $h={38} $mt={3}>
            <BottomTab $ml={14}>Stock Screener</BottomTab>
            <Slot $w={30}><ChevronDown size={12} strokeWidth={1.5} /></Slot>
            <BottomTab $ml={12}>Pine Editor</BottomTab>
            <BottomTab $ml={29}>Strategy Tester</BottomTab>
            <DrawBar>
              <Slot $w={22}><GripDots><i /><i /><i /><i /><i /><i /></GripDots></Slot>
              {drawTools.map(t => <Slot key={t} $w={35.800}>{t === "T" ? <Type size={18} strokeWidth={1} /> : <Ic n={t} s={24} />}</Slot>)}
            </DrawBar>
            <Right>
              <Slot $w={34}><ChevronUp size={20} strokeWidth={1} /></Slot>
              <Slot $w={34}><Ic n="corners" s={20} /></Slot>
              <Slot $w={4} />
            </Right>
          </Panel>
        </Center>

        <SideBar>
          <SideSlot $h={43}><Ic n="list" s={26} /></SideSlot>
          <SideSlot $h={43}><AlarmClock size={25} strokeWidth={1} /></SideSlot>
          <SideSlot $h={43}><Ic n="addList" s={26} /></SideSlot>
          <SideSlot $h={43}><Flame size={25} strokeWidth={1} /></SideSlot>
          <SideSlot $h={43}><Ic n="cal" s={26} /></SideSlot>
          <SideSlot $h={43}><Lightbulb size={25} strokeWidth={1} /></SideSlot>
          <SideSep />
          <SideSlot $h={43}><Ic n="chat" s={26} /></SideSlot>
          <SideSlot $h={43}><Ic n="bulbwave" s={29} /></SideSlot>
          <SideSlot $h={43}><Ic n="playwave" s={28} /><RedDot /></SideSlot>
          <SideSlot $h={43}><Bell size={24} strokeWidth={1} /></SideSlot>
          <SideBottom>
            <SideSlot $h={44}><Layers size={26} strokeWidth={1} /></SideSlot>
            <SideSlot $h={44}><Ic n="help" s={28} /></SideSlot>
          </SideBottom>
        </SideBar>
      </Main>

      <Taskbar>
        <Weather>
          <Cloud size={25} strokeWidth={1} color="#a9c8e8" fill="#bfdaf2" />
          <WeatherText>66°F<Grey>Cloudy</Grey></WeatherText>
        </Weather>
        <Slot $w={42}><WinLogo><i /><i /><i /><i /></WinLogo></Slot>
        <SearchPill>
          <Search size={15} strokeWidth={2} color="#222" />Search
          <BingMark>b</BingMark>
        </SearchPill>
        <Slot $w={46}><DocIcon /></Slot>
        <Slot $w={42}><MeetBall><MeetCam /></MeetBall></Slot>
        <Slot $w={42}><Netflix>N</Netflix></Slot>
        <Slot $w={40}><Chrome /></Slot>
        <Slot $w={42}><Chrome badge="#ee8f80" /></Slot>
        <Slot $w={42}><AppStack $active><TvTile><TvLogo /></TvTile><Under $c="#d8303a" $w={16} /></AppStack></Slot>
        <Slot $w={41}><Chrome badge="#7d8b98" /></Slot>
        <Slot $w={42}><AppStack><Chrome badge="#7fb6e0" /><Under $c="#9a9a9a" $w={20} /></AppStack></Slot>
        <Slot $w={40}>
          <svg width="26" height="30" viewBox="0 0 26 30"><circle cx="13" cy="13" r="12" fill="#222" stroke="#bbb" /><circle cx="13" cy="13" r="7" fill="#ea1c24" /><circle cx="13" cy="27.500" r="1" fill="#555" /></svg>
        </Slot>
        <Tray>
          <Slot $w={28}><ChevronUp size={15} strokeWidth={2} /></Slot>
          <Slot $w={32} $c="#d85a5a"><Mic size={17} strokeWidth={1.3} /></Slot>
          <Slot $w={26}><Wifi size={15} strokeWidth={1.3} /></Slot>
          <Slot $w={22}><Volume1 size={15} strokeWidth={1.2} /></Slot>
          <Slot $w={22}><Ic n="plugbat" s={16} /></Slot>
          <Slot $w={72}><ClockText>11:48 AM<br />9/10/2023</ClockText></Slot>
          <Slot $w={16}><Bell size={15} strokeWidth={1.2} /></Slot>
        </Tray>
      </Taskbar>
    </Page>
  );
}
